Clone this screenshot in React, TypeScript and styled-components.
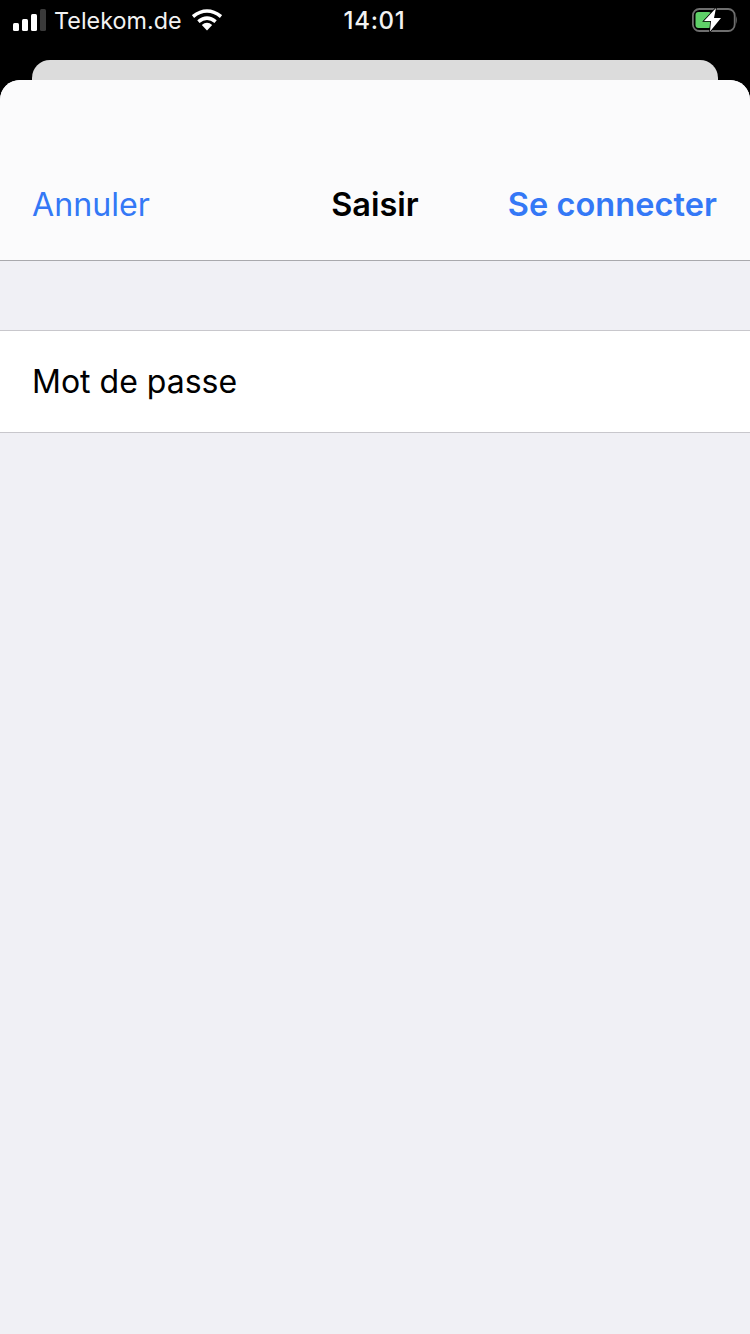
import React from "react";
import styled, { createGlobalStyle } from "styled-components";

const Global = createGlobalStyle`
  html, body { margin: 0; padding: 0; background: #000; }
  #root { width: 750px; height: 1334px; overflow: hidden; }
  * { box-sizing: border-box; }
`;

const Screen = styled.div`
  width: 750px;
  height: 1334px;
  display: flex;
  flex-direction: column;
  background: #000;
  font-family: Inter, "Liberation Sans", sans-serif;
`;

const StatusBar = styled.div`
  height: 40px;
  margin-bottom: 20px;
  padding: 0 13px;
  display: grid;
  grid-template-columns: 1fr auto 1fr;
  align-items: center;
  color: #fff;
`;

const StatusLeft = styled.div`
  display: flex;
  align-items: center;
`;

const StatusRight = styled.div`
  display: flex;
  justify-content: flex-end;
`;

const Carrier = styled.span`
  font-size: 23.3px;
  letter-spacing: 0.05px;
  margin-left: 7px;
  margin-right: 10px;
  color: #f2f2f2;
`;

const Clock = styled.span`
  font-size: 24px;
  font-weight: 500;
  letter-spacing: 0.7px;
  color: #f2f2f2;
  margin-left: -1px;
`;

const BackCard = styled.div`
  height: 20px;
  margin: 0 32px;
  background: #dcdcdc;
  border-radius: 18px 18px 0 0;
`;

const Sheet = styled.div`
  flex: 1;
  display: flex;
  flex-direction: column;
  background: #f0f0f5;
  border-radius: 20px 20px 0 0;
  overflow: hidden;
`;

const NavBar = styled.div`
  height: 181px;
  padding: 0 32px 17px;
  display: grid;
  grid-template-columns: 1fr auto 1fr;
  align-items: end;
  background: #fbfbfc;
  border-bottom: 1px solid #a9a9ad;
`;

const NavAction = styled.span<{ $strong?: boolean; $end?: boolean }>`
  font-size: ${(p) => (p.$strong ? "32.5px" : "32.2px")};
  line-height: 80px;
  height: 80px;
  margin-bottom: -2px;
  margin-right: ${(p) => (p.$end ? "1px" : "0")};
  white-space: nowrap;
  color: #3478f6;
  font-weight: ${(p) => (p.$strong ? 600 : 400)};
  justify-self: ${(p) => (p.$end ? "end" : "start")};
  letter-spacing: ${(p) => (p.$strong ? "0.07px" : "0")};
`;

const NavTitle = styled.span`
  font-size: 32.5px;
  line-height: 80px;
  height: 80px;
  margin-bottom: -2px;
  font-weight: 600;
  color: #000;
`;

const Group = styled.div`
  margin-top: 69px;
  height: 103px;
  padding-left: 32px;
  display: flex;
  align-items: center;
  background: #fff;
  border-top: 1px solid #c8c7cc;
  border-bottom: 1px solid #c8c7cc;
`;

const RowLabel = styled.span`
  font-size: 32px;
  color: #000;
`;

const Signal = () => (
  <svg width="34" height="22" viewBox="0 0 34 22" aria-hidden="true">
    <rect x="0" y="14" width="6" height="8" rx="1.5" fill="#fff" />
    <rect x="9" y="10" width="6" height="12" rx="1.5" fill="#fff" />
    <rect x="18" y="5" width="6" height="17" rx="1.5" fill="#fff" />
    <rect x="27" y="0" width="6" height="22" rx="1.5" fill="#3a3a3a" />
  </svg>
);

const Wifi = () => (
  <svg width="30" height="22" viewBox="0 0 30 22" aria-hidden="true">
    <path d="M1 7.5 Q15 -3.5 29 7.5" fill="none" stroke="#fff" strokeWidth="3.6" />
    <path d="M6.4 12.6 Q15 5.6 23.6 12.6" fill="none" stroke="#fff" strokeWidth="3.6" />
    <path d="M9.8 16 Q15 11.5 20.2 16 L15 21.5 Z" fill="#fff" />
  </svg>
);

const Battery = () => (
  <svg width="45" height="24" viewBox="0 0 45 24" aria-hidden="true">
    <rect x="0.9" y="1" width="41.8" height="22" rx="6.5" fill="none" stroke="#6e6e6e" strokeWidth="1.8" />
    <path d="M44 8 Q45.6 12 44 16 Z" fill="#6e6e6e" />
    <rect x="3.5" y="4" width="16" height="16" rx="3" fill="#5fd068" />
    <path d="M24 0 L12 13 L19 13 L18 23.5 L29 10 L22 10 Z" fill="#fff" stroke="#000" strokeWidth="1.6" paintOrder="stroke" />
  </svg>
);

export default function App() {
  return (
    <Screen>
      <Global />
      <StatusBar>
        <StatusLeft>
          <Signal />
          <Carrier>Telekom.de</Carrier>
          <Wifi />
        </StatusLeft>
        <Clock>14:01</Clock>
        <StatusRight>
          <Battery />
        </StatusRight>
      </StatusBar>
      <BackCard />
      <Sheet>
        <NavBar>
          <NavAction>Annuler</NavAction>
          <NavTitle>Saisir</NavTitle>
          <NavAction $strong $end>Se connecter</NavAction>
        </NavBar>
        <Group>
          <RowLabel>Mot de passe</RowLabel>
        </Group>
      </Sheet>
    </Screen>
  );
}
